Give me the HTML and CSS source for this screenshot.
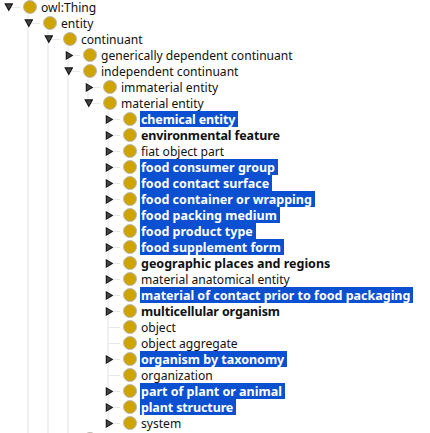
FILE: index.html
```
<!DOCTYPE html>
<html lang="en">
<head>
<meta charset="utf-8">
<title>Class hierarchy</title>
<link rel="stylesheet" href="styles.css">
</head>
<body>
<svg class="defs" width="0" height="0"><defs>
<g id="down"><path d="M1.2 0.9H8.4L4.8 7.3Z" fill="#444" stroke="#151515" stroke-width="1.1"/></g>
<g id="right"><path d="M2.3 0.9V8.1L8.4 4.5Z" fill="#444" stroke="#151515" stroke-width="1.1"/></g>
</defs></svg>
<ul class="tree root">
<li><div class="row"><svg class="arrow"><use href="#down"/></svg><i class="dot"></i><span class="label">owl:Thing</span></div>
<ul class="tree open">
<li><div class="row"><svg class="arrow"><use href="#down"/></svg><i class="dot"></i><span class="label">entity</span></div>
<ul class="tree open">
<li><div class="row"><svg class="arrow"><use href="#down"/></svg><i class="dot"></i><span class="label">continuant</span></div>
<ul class="tree open">
<li><div class="row"><svg class="arrow"><use href="#right"/></svg><i class="dot"></i><span class="label">generically dependent continuant</span></div></li>
<li><div class="row"><svg class="arrow"><use href="#down"/></svg><i class="dot"></i><span class="label">independent continuant</span></div>
<ul class="tree">
<li><div class="row"><svg class="arrow"><use href="#right"/></svg><i class="dot"></i><span class="label">immaterial entity</span></div></li>
<li><div class="row"><svg class="arrow"><use href="#down"/></svg><i class="dot"></i><span class="label">material entity</span></div>
<ul class="tree">
<li><div class="row"><svg class="arrow"><use href="#right"/></svg><i class="dot"></i><span class="label bold selected tight">chemical entity</span></div></li>
<li><div class="row"><svg class="arrow"><use href="#right"/></svg><i class="dot"></i><span class="label bold tight">environmental feature</span></div></li>
<li><div class="row"><svg class="arrow"><use href="#right"/></svg><i class="dot"></i><span class="label">fiat object part</span></div></li>
<li><div class="row"><svg class="arrow"><use href="#right"/></svg><i class="dot"></i><span class="label bold selected">food consumer group</span></div></li>
<li><div class="row"><svg class="arrow"><use href="#right"/></svg><i class="dot"></i><span class="label bold selected">food contact surface</span></div></li>
<li><div class="row"><svg class="arrow"><use href="#right"/></svg><i class="dot"></i><span class="label bold selected">food container or wrapping</span></div></li>
<li><div class="row"><svg class="arrow"><use href="#right"/></svg><i class="dot"></i><span class="label bold selected">food packing medium</span></div></li>
<li><div class="row"><svg class="arrow"><use href="#right"/></svg><i class="dot"></i><span class="label bold selected">food product type</span></div></li>
<li><div class="row"><svg class="arrow"><use href="#right"/></svg><i class="dot"></i><span class="label bold selected">food supplement form</span></div></li>
<li><div class="row"><svg class="arrow"><use href="#right"/></svg><i class="dot"></i><span class="label bold">geographic places and regions</span></div></li>
<li><div class="row"><svg class="arrow"><use href="#right"/></svg><i class="dot"></i><span class="label">material anatomical entity</span></div></li>
<li><div class="row"><svg class="arrow"><use href="#right"/></svg><i class="dot"></i><span class="label bold selected">material of contact prior to food packaging</span></div></li>
<li><div class="row"><svg class="arrow"><use href="#right"/></svg><i class="dot"></i><span class="label bold tight">multicellular organism</span></div></li>
<li><div class="row"><svg class="arrow"></svg><i class="dot"></i><span class="label">object</span></div></li>
<li><div class="row"><svg class="arrow"></svg><i class="dot"></i><span class="label">object aggregate</span></div></li>
<li><div class="row"><svg class="arrow"><use href="#right"/></svg><i class="dot"></i><span class="label bold selected">organism by taxonomy</span></div></li>
<li><div class="row"><svg class="arrow"></svg><i class="dot"></i><span class="label">organization</span></div></li>
<li><div class="row"><svg class="arrow"><use href="#right"/></svg><i class="dot"></i><span class="label bold selected">part of plant or animal</span></div></li>
<li><div class="row"><svg class="arrow"><use href="#right"/></svg><i class="dot"></i><span class="label bold selected tight">plant structure</span></div></li>
<li><div class="row"><svg class="arrow"><use href="#right"/></svg><i class="dot"></i><span class="label">system</span></div></li>
</ul></li>
</ul></li>
<li><div class="row"><svg class="arrow"></svg><i class="dot"></i></div></li>
</ul></li>
</ul></li>
</ul></li>
</ul>
</body>
</html>
```
FILE: styles.css
```
html, body {
  margin: 0;
  height: 433px;
  overflow: hidden;
  background: #fff;
}
.defs { position: absolute; }
.tree {
  list-style: none;
  margin: 0;
  padding: 0 0 0 20px;
}
.root { padding-left: 4px; margin-top: -1px; }
li { position: relative; }
/* vertical guide linking siblings */
li::before {
  content: "";
  position: absolute;
  left: 3px;
  top: 0;
  width: 2px;
  height: 100%;
  background: #f0f0f0;
}
.root > li::before { display: none; }
.tree > li:last-child::before { height: 9px; }
.open > li:last-child::before { height: 100%; }
.row {
  position: relative;
  display: flex;
  align-items: center;
  height: 16px;
  background: linear-gradient(#e8e8e8, #e8e8e8) 5px 8px / 11px 1px no-repeat;
}
.arrow {
  width: 9px;
  height: 9px;
  flex: none;
  margin-right: 10px;
}
.dot {
  box-sizing: border-box;
  flex: none;
  width: 14px;
  height: 14px;
  border: 1px solid #b9b9b9;
  border-radius: 50%;
  background: #cfa400;
}
.label {
  margin-left: 3px;
  padding: 0 3px 0 1px;
  height: 16px;
  font: 12.1px/17px "Noto Sans", sans-serif;
  white-space: pre;
  color: #111;
}
.bold { font-size: 12.5px; font-weight: 700; }
.tight { letter-spacing: -0.13px; }
.selected { background: #0b50d0; color: #fff; }
```
